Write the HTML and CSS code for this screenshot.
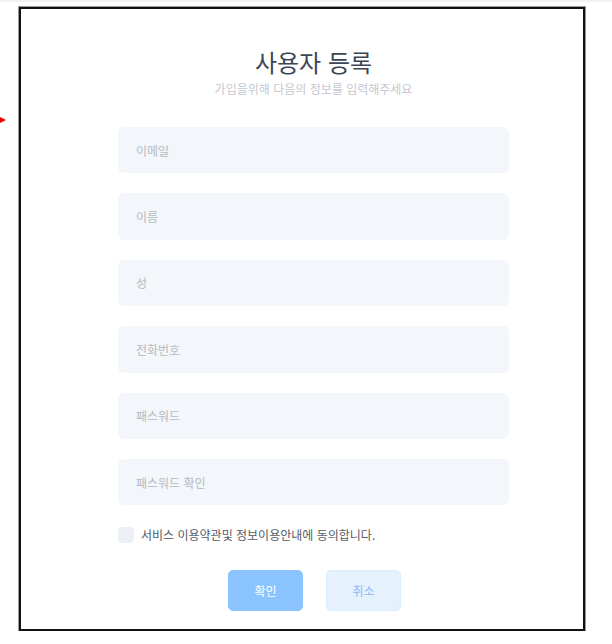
FILE: index.html
```html
<!DOCTYPE html>
<html lang="ko">
<head>
    <meta charset="UTF-8">
    <meta name="viewport" content="width=device-width, initial-scale=1.0">
    <title>사용자 등록</title>
    <link rel="stylesheet" href="styles.css">
</head>
<body>
    <span class="pointer"></span>
    <div class="frame">
        <form class="signup">
            <h1>사용자 등록</h1>
            <p class="subtitle">가입을위해 다음의 정보를 입력해주세요</p>
            <div class="fields">
                <input type="email" class="field" placeholder="이메일">
                <input type="text" class="field" placeholder="이름">
                <input type="text" class="field" placeholder="성">
                <input type="tel" class="field" placeholder="전화번호">
                <input type="password" class="field" placeholder="패스워드">
                <input type="password" class="field" placeholder="패스워드 확인">
            </div>
            <label class="agree">
                <span class="box"></span>
                서비스 이용약관및 정보이용안내에 동의합니다.
            </label>
            <div class="actions">
                <button type="submit" class="btn btn-primary">확인</button>
                <button type="button" class="btn btn-plain">취소</button>
            </div>
        </form>
    </div>
</body>
</html>
```

FILE: styles.css
```css
html, body {
    margin: 0;
    padding: 0;
    background: #fff;
    font-family: "Noto Sans CJK KR", "Noto Sans", sans-serif;
}

body {
    position: relative;
    border-top: 2px solid #f2f2f2;
    padding-top: 5px;
}

.pointer {
    position: absolute;
    left: 0;
    top: 115px;
    width: 0;
    height: 0;
    border-top: 3px solid transparent;
    border-bottom: 3px solid transparent;
    border-left: 6px solid #e00;
}

.frame {
    box-sizing: border-box;
    width: 566px;
    height: 624px;
    margin-left: 19px;
    border: 2px solid #111;
    box-shadow: 0 0 0 1px #999;
    padding: 37px 0 0 97px;
}

.signup {
    width: 391px;
    text-align: center;
}

h1 {
    margin: 0;
    font-size: 24px;
    line-height: 32px;
    font-weight: 400;
    color: #3d4654;
}

.subtitle {
    margin: 2px 0 0;
    font-size: 12px;
    line-height: 17px;
    color: #c3c7cf;
}

.fields {
    display: flex;
    flex-direction: column;
    gap: 20px;
    margin-top: 30px;
}

.field {
    box-sizing: border-box;
    width: 100%;
    height: 46.4px;
    padding: 0 18px;
    border: none;
    border-radius: 6px;
    background: #f3f6fa;
    font-family: inherit;
    font-size: 12px;
    color: #555;
    outline: none;
}

.field::placeholder {
    color: #b6bac2;
}

.agree {
    display: flex;
    align-items: center;
    gap: 7px;
    margin-top: 22px;
    font-size: 12px;
    line-height: 16px;
    color: #555b66;
    text-align: left;
}

.box {
    width: 16px;
    height: 16px;
    border-radius: 4px;
    background: #edf0f4;
}

.actions {
    display: flex;
    justify-content: center;
    gap: 23px;
    margin-top: 27px;
    padding-left: 2px;
}

.btn {
    box-sizing: border-box;
    width: 75px;
    height: 41px;
    border-radius: 5px;
    font-family: inherit;
    font-size: 12px;
    cursor: pointer;
}

.btn-primary {
    background: #8bc3ff;
    border: 1px solid #8bc3ff;
    color: #fff;
}

.btn-plain {
    background: #e6f1fe;
    border: 1px solid #dcebfd;
    color: #86bdf8;
}
```
